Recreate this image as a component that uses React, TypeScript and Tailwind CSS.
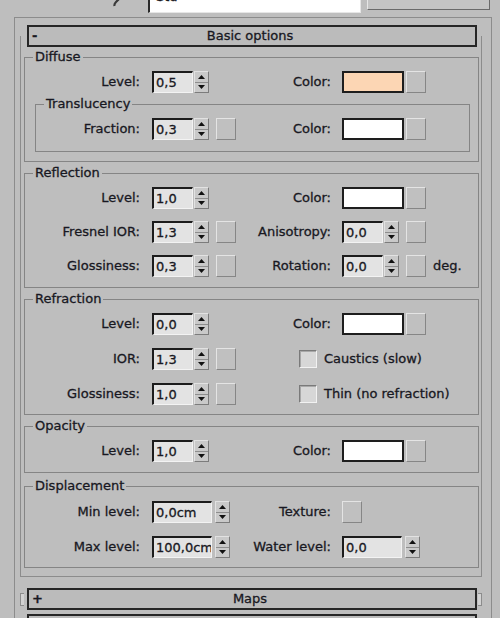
import React from "react";

type P = { children?: React.ReactNode; className?: string };

const Up = () => (
  <svg width="7" height="4" viewBox="0 0 7 4">
    <path d="M3.5 0L7 4H0Z" fill="#111" />
  </svg>
);
const Down = () => (
  <svg width="7" height="4" viewBox="0 0 7 4">
    <path d="M0 0H7L3.5 4Z" fill="#111" />
  </svg>
);

function Arrows({ className = "" }: P) {
  return (
    <div
      className={`flex h-[22px] w-[15px] shrink-0 flex-col border border-b-[#7c7c7c] border-l-[#e2e2e2] border-r-[#7c7c7c] border-t-[#e2e2e2] bg-[#c9c9c9] ${className}`}
    >
      <div className="flex flex-1 items-center justify-center border-b border-[#8e8e8e]">
        <Up />
      </div>
      <div className="flex flex-1 items-center justify-center">
        <Down />
      </div>
    </div>
  );
}

const fieldBase =
  "flex h-[22px] shrink-0 items-center overflow-hidden whitespace-nowrap border-b border-l-2 border-r border-t-2 border-b-[#f3f3f3] border-l-[#1c1c1c] border-r-[#f3f3f3] border-t-[#1c1c1c] bg-[#e3e3e3] pl-[2px]";

function Spinner({ value, wide = false }: { value: string; wide?: boolean }) {
  return (
    <div className="flex shrink-0">
      <div className={`${fieldBase} ${wide ? "w-[60px]" : "w-[41px]"}`}>{value}</div>
      <Arrows className={wide ? "ml-[3px]" : "ml-[1px]"} />
    </div>
  );
}

function MapBtn({ className = "" }: P) {
  return (
    <div
      className={`h-[22px] w-[20px] shrink-0 border border-b-[#868686] border-l-[#e4e4e4] border-r-[#868686] border-t-[#e4e4e4] bg-[#c0c0c0] ${className}`}
    />
  );
}

function Swatch({ peach = false }: { peach?: boolean }) {
  return (
    <div
      className={`h-[22px] w-[62px] shrink-0 border-2 border-[#1e1e1e] ${peach ? "bg-[#fcd6b4]" : "bg-white"}`}
    />
  );
}

function ColorCtl({ peach = false }: { peach?: boolean }) {
  return (
    <div className="ml-[11px] flex shrink-0">
      <Swatch peach={peach} />
      <MapBtn className="ml-[2px]" />
    </div>
  );
}

function Lbl({ className = "", children }: P) {
  return <div className={`flex shrink-0 justify-end whitespace-nowrap ${className}`}>{children}</div>;
}

function Row({ children }: P) {
  return <div className="flex h-[22px] items-center">{children}</div>;
}

function Left({ children }: P) {
  return <div className="ml-[12px] flex w-[100px] shrink-0 items-center">{children}</div>;
}

function Check({ label }: { label: string }) {
  return (
    <div className="ml-[47px] flex items-center">
      <div className="h-[18px] w-[18px] shrink-0 border border-b-[#f2f2f2] border-l-[#7a7a7a] border-r-[#f2f2f2] border-t-[#7a7a7a] bg-[#d7d7d7] shadow-[inset_1px_1px_0_#a8a8a8]" />
      <span className="ml-[7px] whitespace-nowrap">{label}</span>
    </div>
  );
}

function Group({ title, className = "", children }: P & { title: string }) {
  return (
    <fieldset className={`border border-[#858585] ${className}`}>
      <legend className="ml-[8px] px-[2px] leading-[16px]">{title}</legend>
      {children}
    </fieldset>
  );
}

function Header({ sign, title, className = "" }: { sign: string; title: string; className?: string }) {
  return (
    <div
      className={`grid h-[22px] w-[450px] shrink-0 grid-cols-[16px_1fr_20px] items-center border-2 border-[#262626] bg-[#bbbbbb] ${className}`}
    >
      <span className="pl-[3px] font-bold">{sign}</span>
      <span className="text-center">{title}</span>
      <span />
    </div>
  );
}

export default function App() {
  return (
    <div className="h-[618px] w-[500px] overflow-hidden bg-[#bebebe] font-['DejaVu_Sans',sans-serif] text-[13px] leading-[16px] text-[#181822] [-webkit-text-stroke:0.3px]">
      {/* top strip */}
      <div className="flex h-[13px] items-end overflow-hidden">
        <svg className="mb-[4px] ml-[111px] shrink-0" width="14" height="12" viewBox="0 0 14 12">
          <path d="M13 -3 L5 5 Q3 7 3.5 9" stroke="#3a3a3a" strokeWidth="2.2" fill="none" />
        </svg>
        <div className="ml-[23px] flex h-[24px] w-[213px] shrink-0 items-end border-b border-l-2 border-r border-b-[#e6e6e6] border-l-[#2a2a2a] border-r-[#e6e6e6] bg-white pb-[7px] pl-[6px]">
          Std
        </div>
        <div className="mb-[3px] ml-[6px] flex h-[24px] w-[123px] shrink-0 items-end justify-center border border-b-[#6a6a6a] border-l-[#e6e6e6] border-r-[#6a6a6a] border-t-[#e6e6e6] bg-[#c4c4c4] pb-[6px]">
          Standard
        </div>
      </div>

      {/* outer panel */}
      <div className="ml-[14px] mt-[4px] h-[601px] w-[478px] border-l border-r border-t border-[#8c8c8c] pt-[7px]">
        <div className="ml-[5px] w-[462px]">
          <Header sign="-" title="Basic options" className="ml-[7px]" />
          <div className="-mt-[11px] border-b border-l border-r border-[#8c8c8c] pb-[8px] pl-[3px] pt-[13px]">
            {/* Diffuse */}
            <Group title="Diffuse" className="w-[455px] pb-[9px] pt-[6px]">
              <Row>
                <Lbl className="w-[115px]">Level:</Lbl>
                <Left>
                  <Spinner value="0,5" />
                </Left>
                <Lbl className="w-[79px]">Color:</Lbl>
                <ColorCtl peach />
              </Row>
              <Group title="Translucency" className="ml-[10px] mt-[3px] w-[435px] pb-[11px] pt-[6px]">
                <Row>
                  <Lbl className="w-[104px]">Fraction:</Lbl>
                  <Left>
                    <Spinner value="0,3" />
                    <MapBtn className="ml-[7px]" />
                  </Left>
                  <Lbl className="w-[79px]">Color:</Lbl>
                  <ColorCtl />
                </Row>
              </Group>
            </Group>

            {/* Reflection */}
            <Group title="Reflection" className="mt-[3px] w-[455px] pb-[10px] pt-[6px]">
              <div className="flex flex-col gap-[12px]">
                <Row>
                  <Lbl className="w-[115px]">Level:</Lbl>
                  <Left>
                    <Spinner value="1,0" />
                  </Left>
                  <Lbl className="w-[79px]">Color:</Lbl>
                  <ColorCtl />
                </Row>
                <Row>
                  <Lbl className="w-[115px]">Fresnel IOR:</Lbl>
                  <Left>
                    <Spinner value="1,3" />
                    <MapBtn className="ml-[7px]" />
                  </Left>
                  <Lbl className="w-[79px]">Anisotropy:</Lbl>
                  <div className="ml-[11px] flex items-center">
                    <Spinner value="0,0" />
                    <MapBtn className="ml-[7px]" />
                  </div>
                </Row>
                <Row>
                  <Lbl className="w-[115px]">Glossiness:</Lbl>
                  <Left>
                    <Spinner value="0,3" />
                    <MapBtn className="ml-[7px]" />
                  </Left>
                  <Lbl className="w-[79px]">Rotation:</Lbl>
                  <div className="ml-[11px] flex items-center">
                    <Spinner value="0,0" />
                    <MapBtn className="ml-[7px]" />
                    <span className="ml-[7px]">deg.</span>
                  </div>
                </Row>
              </div>
            </Group>

            {/* Refraction */}
            <Group title="Refraction" className="mt-[3px] w-[455px] pb-[9px] pt-[6px]">
              <div className="flex flex-col gap-[13px]">
                <Row>
                  <Lbl className="w-[115px]">Level:</Lbl>
                  <Left>
                    <Spinner value="0,0" />
                  </Left>
                  <Lbl className="w-[79px]">Color:</Lbl>
                  <ColorCtl />
                </Row>
                <Row>
                  <Lbl className="w-[115px]">IOR:</Lbl>
                  <Left>
                    <Spinner value="1,3" />
                    <MapBtn className="ml-[7px]" />
                  </Left>
                  <Check label="Caustics (slow)" />
                </Row>
                <Row>
                  <Lbl className="w-[115px]">Glossiness:</Lbl>
                  <Left>
                    <Spinner value="1,0" />
                    <MapBtn className="ml-[7px]" />
                  </Left>
                  <Check label="Thin (no refraction)" />
                </Row>
              </div>
            </Group>

            {/* Opacity */}
            <Group title="Opacity" className="mt-[3px] w-[455px] pb-[10px] pt-[6px]">
              <Row>
                <Lbl className="w-[115px]">Level:</Lbl>
                <Left>
                  <Spinner value="1,0" />
                </Left>
                <Lbl className="w-[79px]">Color:</Lbl>
                <ColorCtl />
              </Row>
            </Group>

            {/* Displacement */}
            <Group title="Displacement" className="mt-[5px] w-[455px] pb-[9px] pt-[7px]">
              <div className="flex flex-col gap-[13px]">
                <Row>
                  <Lbl className="w-[115px]">Min level:</Lbl>
                  <Left>
                    <Spinner value="0,0cm" wide />
                  </Left>
                  <Lbl className="w-[79px]">Texture:</Lbl>
                  <MapBtn className="ml-[11px]" />
                </Row>
                <Row>
                  <Lbl className="w-[115px]">Max level:</Lbl>
                  <Left>
                    <Spinner value="100,0cm" wide />
                  </Left>
                  <Lbl className="w-[79px]">Water level:</Lbl>
                  <div className="ml-[11px] flex">
                    <Spinner value="0,0" wide />
                  </div>
                </Row>
              </div>
            </Group>
          </div>
        </div>

        {/* Maps rollout */}
        <div className="ml-[5px] mt-[11px] flex w-[462px] items-center">
          <div className="h-[13px] w-[4px] shrink-0 border-b border-l border-t border-[#8c8c8c] bg-[#d2d2d2]" />
          <Header sign="+" title="Maps" className="ml-[3px]" />
          <div className="ml-[1px] h-[13px] w-[4px] shrink-0 border-b border-r border-t border-[#8c8c8c] bg-[#d2d2d2]" />
        </div>
        <div className="ml-[12px] mt-[4px] h-[22px] w-[450px] border-2 border-[#262626] bg-[#bbbbbb]" />
      </div>
    </div>
  );
}
